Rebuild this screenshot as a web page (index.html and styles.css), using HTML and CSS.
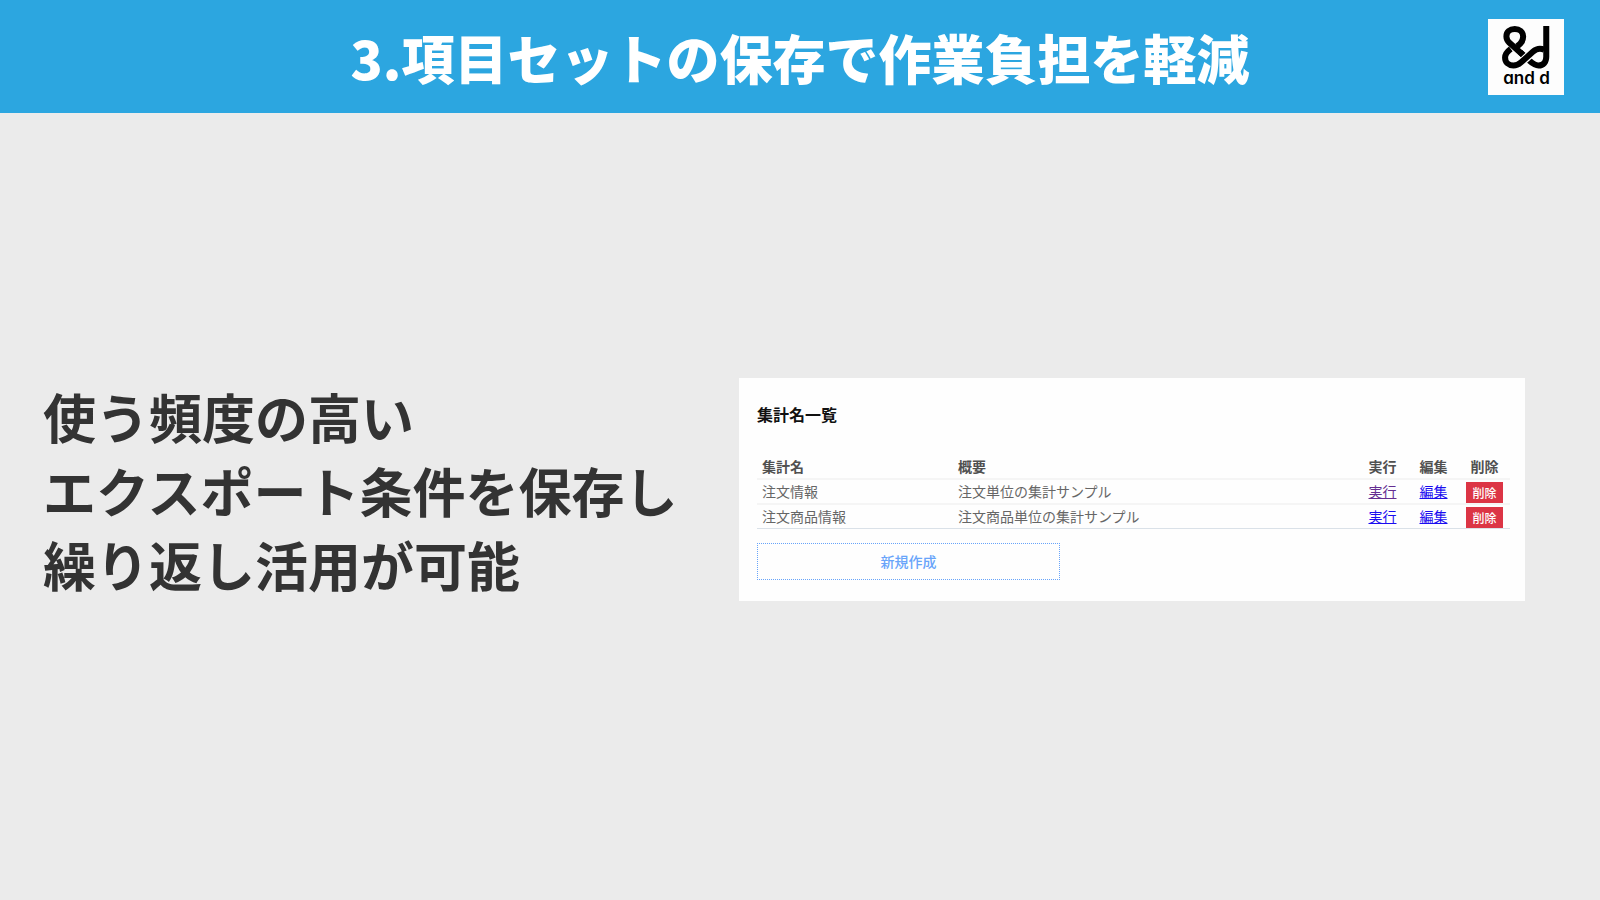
FILE: index.html
```html
<!DOCTYPE html>
<html lang="ja">
<head>
    <meta charset="UTF-8">
    <meta name="viewport" content="width=device-width, initial-scale=1.0">
    <title>項目セットの保存</title>
    <link rel="stylesheet" href="styles.css">
</head>
<body>

<!-- Header -->
<header class="header">
    <h1>3.項目セットの保存で作業負担を軽減</h1>
    <div class="logo">
        <svg viewBox="24 27 227 227" role="img" aria-label="and d">
            <g fill="none" stroke="#000" stroke-width="18">
                <path d="M198 48V140C198 156 189 166 175 166C165 166 158 161 148 152L120 126"/>
                <path stroke="#fdfdfd" stroke-width="25" d="M125 155L158 125"/>
                <path d="M112 108L120 101C127 94 129 88 129 79C129 66 118 57 104 57C89 57 79 66 79 79C79 87 82 92 88 98L128 134"/>
                <path d="M92 116C80 125 75 132 75 142C75 157 86 166 100 166C109 166 115 163 122 157L158 125C165 119 171 116 179 116C184 116 188 117 192 119"/>
            </g>
            <text x="139" y="222" text-anchor="middle">and d</text>
        </svg>
    </div>
</header>

<main class="main">
    <p class="lead">使う頻度の高い<br>エクスポート条件を保存し<br>繰り返し活用が可能</p>

    <!-- Summary List -->
    <section class="card">
        <h2>集計名一覧</h2>
        <table class="list">
            <thead>
                <tr>
                    <th class="name">集計名</th>
                    <th>概要</th>
                    <th class="action">実行</th>
                    <th class="action">編集</th>
                    <th class="action">削除</th>
                </tr>
            </thead>
            <tbody>
                <tr>
                    <td>注文情報</td>
                    <td>注文単位の集計サンプル</td>
                    <td class="action"><a href="#run1" class="visited">実行</a></td>
                    <td class="action"><a href="#edit1">編集</a></td>
                    <td class="action"><button type="button" class="delete">削除</button></td>
                </tr>
                <tr>
                    <td>注文商品情報</td>
                    <td>注文商品単位の集計サンプル</td>
                    <td class="action"><a href="#run2">実行</a></td>
                    <td class="action"><a href="#edit2">編集</a></td>
                    <td class="action"><button type="button" class="delete">削除</button></td>
                </tr>
            </tbody>
        </table>
        <button type="button" class="create">新規作成</button>
    </section>
</main>

</body>
</html>
```

FILE: styles.css
```css
/* Global Styles */
* {
    box-sizing: border-box;
}

body {
    font-family: "Noto Sans CJK JP", sans-serif;
    background-color: #ebebeb;
    margin: 0;
    min-height: 100vh;
    display: flex;
    flex-direction: column;
    color: #333;
}

/* Header */
.header {
    display: grid;
    grid-template-columns: 1fr auto 1fr;
    align-items: center;
    padding: 19px 36px 18px;
    background-color: #2ca6e0;
}

h1 {
    grid-column: 2;
    margin: 0;
    font-size: 53px;
    font-weight: 900;
    line-height: 76px;
    color: #fff;
}

.logo {
    justify-self: end;
    width: 76px;
    height: 76px;
    background-color: #fdfdfd;
}

.logo svg {
    display: block;
}

.logo text {
    font-family: Inter, sans-serif;
    font-size: 51px;
    font-weight: 600;
    font-feature-settings: "cv11";
}

/* Content */
.main {
    flex: 1;
    display: grid;
    grid-template-columns: 696fr 786fr;
    align-items: center;
    padding: 0 75px 34px 43px;
}

.lead {
    margin: 0;
    font-size: 53px;
    font-weight: 700;
    line-height: 74px;
}

.card {
    padding: 24px 15px 21px 18px;
    background-color: #fefefe;
}

h2 {
    margin: 0 0 28px;
    font-size: 16px;
    line-height: 24px;
    color: #111;
}

/* Table */
.list {
    width: 100%;
    table-layout: fixed;
    border-collapse: collapse;
    border-bottom: 1px solid #dae1e8;
    font-size: 14px;
    line-height: 22px;
    color: #666;
}

th, td {
    height: 25px;
    padding: 0 5px;
    text-align: left;
}

td {
    height: 24px;
    vertical-align: top;
}

th {
    color: #505050;
}

tbody tr {
    border-top: 2px solid #f5f5f5;
}

.name {
    width: 196px;
}

.action {
    width: 51px;
    padding: 0;
    text-align: center;
}

a {
    color: #1a0df0;
}

a.visited {
    color: #642d91;
}

/* Buttons */
button {
    font-family: inherit;
    cursor: pointer;
}

.delete {
    display: block;
    margin: 2px auto 0;
    padding: 0 5px;
    border: 1px solid #dc3545;
    background-color: #dc3545;
    color: #fff;
    font-size: 12px;
    font-weight: 500;
    line-height: 19px;
}

.create {
    display: block;
    width: 303px;
    max-width: 100%;
    margin-top: 14px;
    padding: 7px;
    border: 1px dotted #68a4fa;
    background-color: transparent;
    color: #68a4fa;
    font-size: 14px;
    font-weight: 500;
    line-height: 21px;
}
```
